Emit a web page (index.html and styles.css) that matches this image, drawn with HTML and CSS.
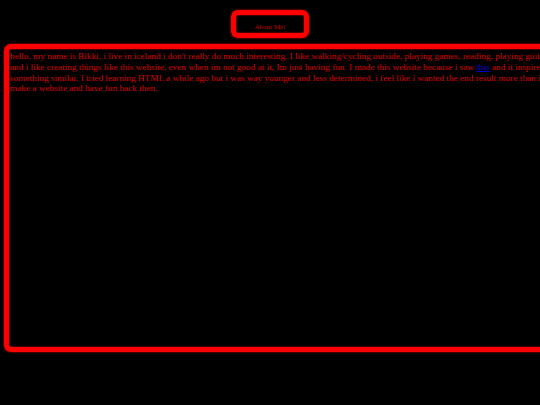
FILE: index.html
```html
<!DOCTYPE html>
<html>
<head>
<meta charset="utf-8">
<title>Rikki</title>
<link rel="stylesheet" href="styles.css">
</head>
<body>
<nav class="nav">
  <a class="nav-button" href="#">About Me!</a>
</nav>
<main class="box">
  <p class="about">hello, my name is Rikki, i live in iceland i don't really do much interesting. I like walking/cycling outside, playing games, reading, playing guitar and drawing<br>and i like creating things like this website, even when im not good at it, Im just having fun. I made this website because i saw <a class="link" href="#">this</a> and it inspired me to make<br>something similar. I tried learning HTML a while ago but i was way younger and less determined, i feel like i wanted the end result more than i wanted to<br>make a website and have fun back then.</p>
</main>
</body>
</html>
```
FILE: styles.css
```css
html, body {
  margin: 0;
  padding: 0;
  background: #000;
  overflow: hidden;
  width: 540px;
  height: 405px;
}
body {
  font-family: "Liberation Serif", "Times New Roman", serif;
  color: #d80000;
}
.nav {
  display: flex;
  justify-content: center;
  padding-top: 10px;
}
.nav-button {
  display: flex;
  align-items: center;
  justify-content: center;
  box-sizing: border-box;
  width: 78px;
  height: 28px;
  padding-top: 5px;
  border: 5px solid #f00;
  border-radius: 7px;
  box-shadow: 0 0 2px #f00, inset 0 0 2px #f00;
  color: #c80000;
  font-size: 7px;
  text-decoration: none;
}
.box {
  box-sizing: border-box;
  width: 680px;
  height: 308px;
  margin: 6px 0 0 4px;
  border: 5px solid #f00;
  border-radius: 7px;
  box-shadow: 0 0 2px #f00, inset 0 0 2px #f00;
  padding: 2px 0 0 1px;
}
.about {
  margin: 0;
  font-size: 9.25px;
  line-height: 10.8px;
  white-space: nowrap;
}
.link {
  color: #0000d0;
}
```
